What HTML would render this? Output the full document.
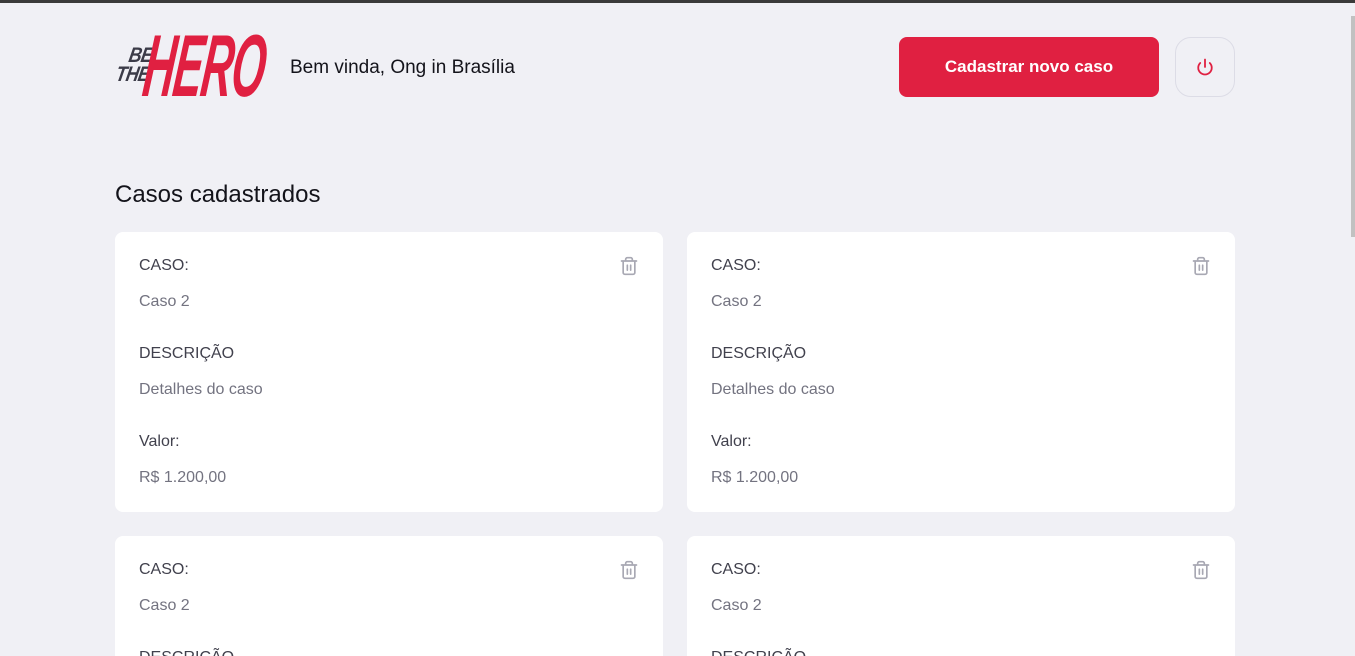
<!DOCTYPE html>
<html><head><meta charset="utf-8"><style>
*{margin:0;padding:0;box-sizing:border-box}
html,body{width:1355px;height:656px;overflow:hidden}
body{background:#f0f0f5;font-family:"Liberation Sans",Roboto,sans-serif;position:relative}
.topbar{position:absolute;left:0;top:0;width:1355px;height:3px;background:#3a3a3a}
.sb{position:absolute;left:1351px;top:16px;width:4px;height:221px;background:#c1c1c1}
.lg{position:absolute;font-weight:bold;font-style:italic;white-space:nowrap}
.be{color:#3b3b48;font-size:21px;line-height:21px;transform:scaleX(.85) skewX(-12deg);transform-origin:left top;letter-spacing:-1px}
.hero{left:150px;top:22px;color:#e02041;font-size:88px;line-height:88px;transform:scaleX(.49) skewX(-14deg);transform-origin:left top;letter-spacing:-2px}
.welcome{position:absolute;left:290px;top:57px;font-size:19px;color:#13131a}
.btn{position:absolute;left:899px;top:37px;width:260px;height:60px;background:#e02041;border-radius:8px;color:#fff;font-weight:bold;font-size:17px;text-align:center;line-height:60px}
.pw{position:absolute;left:1175px;top:37px;width:60px;height:60px;border:1px solid #dcdce6;border-radius:16px;display:flex;align-items:center;justify-content:center}
h1{position:absolute;left:115px;top:181px;font-size:24px;font-weight:normal;color:#13131a}
.card{position:absolute;width:548px;height:280px;background:#fff;border-radius:8px;padding:24px}
.card .l{font-size:16px;color:#41414d;position:absolute;left:24px}
.card .v{font-size:16px;color:#737380;position:absolute;left:24px}
.tr{position:absolute;right:24px;top:24px}
</style></head><body>
<div class="topbar"></div><div class="sb"></div>
<div class="lg be" style="left:131px;top:45px">BE</div>
<div class="lg be" style="left:118px;top:64px">THE</div>
<div class="lg hero">HERO</div>
<div class="welcome">Bem vinda, Ong in Brasília</div>
<div class="btn">Cadastrar novo caso</div>
<div class="pw"><svg width="18" height="18" viewBox="0 0 24 24" fill="none" stroke="#e02041" stroke-width="2.4" stroke-linecap="round"><path d="M18.36 6.64a9 9 0 1 1-12.73 0"/><line x1="12" y1="2" x2="12" y2="12"/></svg></div>
<h1>Casos cadastrados</h1>

<div class="card" style="left:115px;top:232px">
<svg class="tr" width="20" height="20" viewBox="0 0 24 24" fill="none" stroke="#a8a8b3" stroke-width="2" stroke-linecap="round" stroke-linejoin="round"><path d="M3 6h18M19 6v14a2 2 0 0 1-2 2H7a2 2 0 0 1-2-2V6M8 6V4a2 2 0 0 1 2-2h4a2 2 0 0 1 2 2v2M10 11v6M14 11v6"/></svg>
<div class="l" style="top:25px">CASO:</div><div class="v" style="top:61px">Caso 2</div>
<div class="l" style="top:113px">DESCRIÇÃO</div><div class="v" style="top:149px">Detalhes do caso</div>
<div class="l" style="top:201px">Valor:</div><div class="v" style="top:237px">R$ 1.200,00</div></div>

<div class="card" style="left:687px;top:232px">
<svg class="tr" width="20" height="20" viewBox="0 0 24 24" fill="none" stroke="#a8a8b3" stroke-width="2" stroke-linecap="round" stroke-linejoin="round"><path d="M3 6h18M19 6v14a2 2 0 0 1-2 2H7a2 2 0 0 1-2-2V6M8 6V4a2 2 0 0 1 2-2h4a2 2 0 0 1 2 2v2M10 11v6M14 11v6"/></svg>
<div class="l" style="top:25px">CASO:</div><div class="v" style="top:61px">Caso 2</div>
<div class="l" style="top:113px">DESCRIÇÃO</div><div class="v" style="top:149px">Detalhes do caso</div>
<div class="l" style="top:201px">Valor:</div><div class="v" style="top:237px">R$ 1.200,00</div></div>

<div class="card" style="left:115px;top:536px">
<svg class="tr" width="20" height="20" viewBox="0 0 24 24" fill="none" stroke="#a8a8b3" stroke-width="2" stroke-linecap="round" stroke-linejoin="round"><path d="M3 6h18M19 6v14a2 2 0 0 1-2 2H7a2 2 0 0 1-2-2V6M8 6V4a2 2 0 0 1 2-2h4a2 2 0 0 1 2 2v2M10 11v6M14 11v6"/></svg>
<div class="l" style="top:25px">CASO:</div><div class="v" style="top:61px">Caso 2</div>
<div class="l" style="top:113px">DESCRIÇÃO</div></div>

<div class="card" style="left:687px;top:536px">
<svg class="tr" width="20" height="20" viewBox="0 0 24 24" fill="none" stroke="#a8a8b3" stroke-width="2" stroke-linecap="round" stroke-linejoin="round"><path d="M3 6h18M19 6v14a2 2 0 0 1-2 2H7a2 2 0 0 1-2-2V6M8 6V4a2 2 0 0 1 2-2h4a2 2 0 0 1 2 2v2M10 11v6M14 11v6"/></svg>
<div class="l" style="top:25px">CASO:</div><div class="v" style="top:61px">Caso 2</div>
<div class="l" style="top:113px">DESCRIÇÃO</div></div>
</body></html>
